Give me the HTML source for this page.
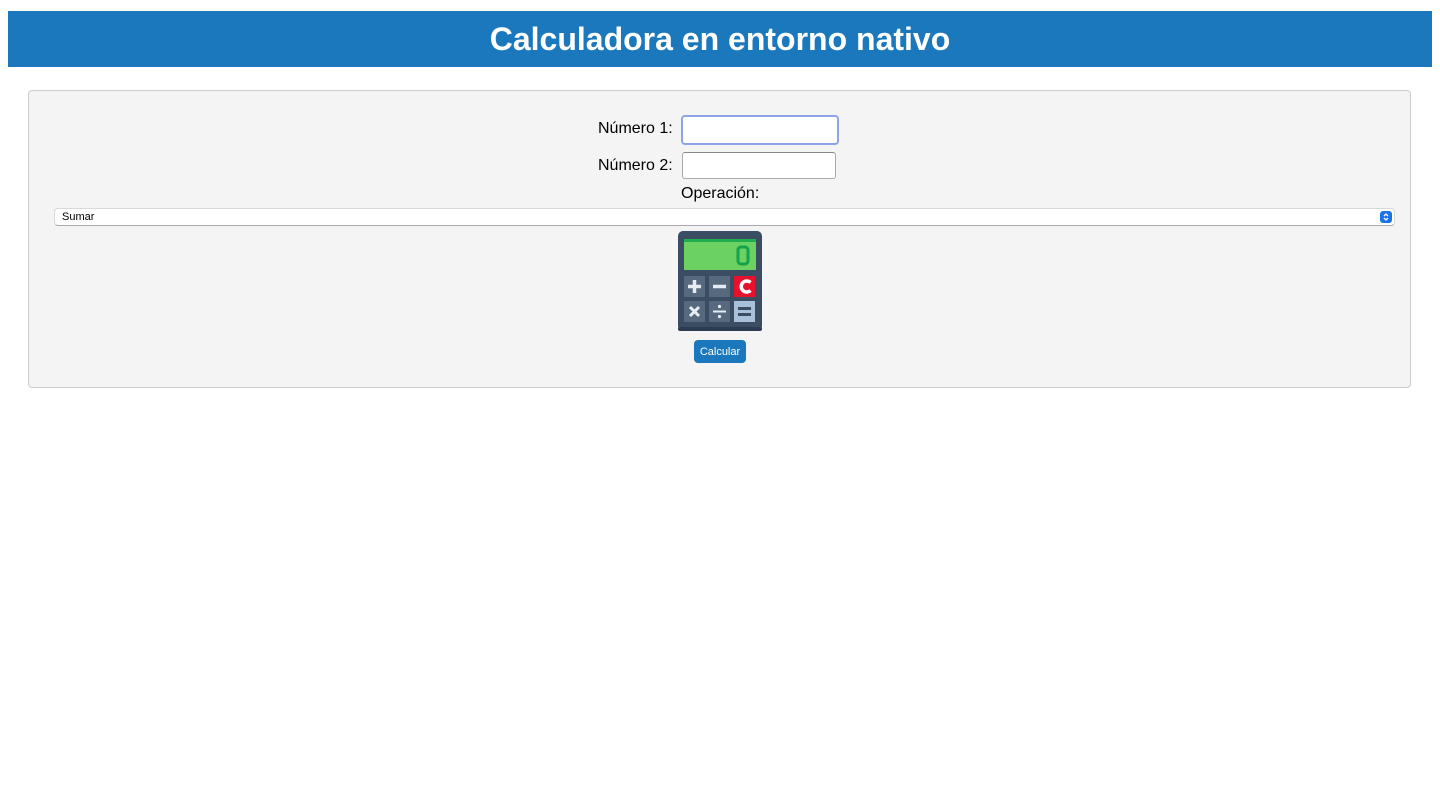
<!DOCTYPE html>
<html><head><meta charset="utf-8"><style>
body{margin:0;background:#fff;font-family:"Liberation Sans",Arial,sans-serif;}
.hdr{position:absolute;left:8px;top:11px;width:1424px;height:56px;background:#1b78bc;color:#fff;font-weight:bold;font-size:32px;text-align:center;line-height:56px;}
.panel{position:absolute;left:28px;top:90px;width:1381px;height:296px;background:#f4f4f4;border:1px solid #ccc;border-radius:4px;}
.lbl{position:absolute;font-size:16px;color:#000;}
.inp{position:absolute;background:#fff;border:1px solid #aaa;border-top-color:#888;border-radius:3px;box-sizing:border-box;}
.sel{position:absolute;left:54px;top:208px;width:1341px;height:18px;background:#fff;border:1px solid #d8d8d8;border-bottom-color:#aaa;border-radius:4px;box-sizing:border-box;font-size:11px;line-height:17px;padding-left:7px;}
.arrow{position:absolute;right:2px;top:2px;width:12px;height:12px;background:#1a73e8;border-radius:3px;}
.btn{position:absolute;left:694px;top:340px;width:52px;height:23px;background:#1b78bc;border-radius:4px;color:#fff;font-size:11px;text-align:center;line-height:24px;}
</style></head><body>
<div class="hdr">Calculadora en entorno nativo</div>
<div class="panel"></div>
<div class="lbl" style="left:598px;top:120px">Número 1:</div>
<div class="inp" style="left:681px;top:115px;width:158px;height:30px;border:2px solid #8fa4e8;border-radius:4px;"></div>
<div class="lbl" style="left:598px;top:157px">Número 2:</div>
<div class="inp" style="left:682px;top:152px;width:154px;height:27px;"></div>
<div class="lbl" style="left:681px;top:185px">Operación:</div>
<div class="sel">Sumar<div class="arrow"><svg width="12" height="12" viewBox="0 0 12 12"><path d="M4 5 L6 3 L8 5 M4 7 L6 9 L8 7" stroke="#fff" stroke-width="1.3" fill="none"/></svg></div></div>
<svg style="position:absolute;left:678px;top:231px" width="84" height="100" viewBox="0 0 84 100">
<rect x="0" y="0" width="84" height="100" rx="5" fill="#3b4d63"/>
<rect x="0" y="96" width="84" height="4" rx="2" fill="#2c3c50"/>
<rect x="6" y="8" width="72" height="31" fill="#6bd162"/>
<rect x="6" y="8" width="72" height="3" fill="#1fae4d"/>
<rect x="60" y="16" width="10" height="17" rx="3" fill="none" stroke="#16a14a" stroke-width="3"/>
<g fill="#56697e"><rect x="6" y="45" width="21" height="21"/><rect x="31" y="45" width="21" height="21"/><rect x="6" y="70" width="21" height="21"/><rect x="31" y="70" width="21" height="21"/></g>
<rect x="56" y="45" width="21" height="21" fill="#e8112d"/>
<rect x="56" y="70" width="21" height="21" fill="#a9c0da"/>
<g stroke="#e6ecf2" stroke-width="3.5"><path d="M10 55.5h13M16.5 49v13"/><path d="M35 55.5h13"/><path d="M12 76l9 9M21 76l-9 9" stroke-width="3"/><path d="M35 80.5h13" stroke-width="2"/></g>
<circle cx="41.5" cy="75.5" r="1.6" fill="#e6ecf2"/><circle cx="41.5" cy="85.5" r="1.6" fill="#e6ecf2"/>
<path d="M72.5 51.5a5.5 5.5 0 1 0 0 8" stroke="#fff" stroke-width="3.5" fill="none"/>
<g stroke="#3b4d63" stroke-width="3"><path d="M60 77.5h13M60 83.5h13"/></g>
</svg>
<div class="btn">Calcular</div>
</body></html>
